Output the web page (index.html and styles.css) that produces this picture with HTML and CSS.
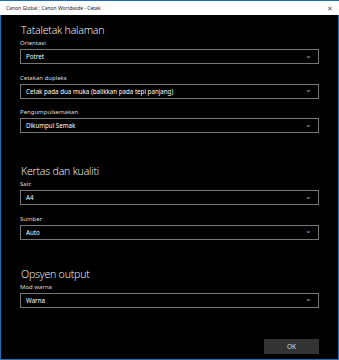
FILE: index.html
```html
<!DOCTYPE html>
<html lang="ms">
<head>
    <meta charset="UTF-8">
    <meta name="viewport" content="width=device-width, initial-scale=1.0">
    <title>Canon Global : Canon Worldwide - Cetak</title>
    <link rel="stylesheet" href="styles.css">
</head>
<body>
    <div class="window">
        <div class="titlebar">
            <span class="title">Canon Global : Canon Worldwide - Cetak</span>
            <span class="close">✕</span>
        </div>
        <div class="content">
            <h2>Tataletak halaman</h2>
            <div class="field">
                <label>Orientasi</label>
                <div class="select"><span>Potret</span><span class="chev">⌄</span></div>
            </div>
            <div class="field">
                <label>Cetakan dupleks</label>
                <div class="select"><span>Cetak pada dua muka (balikkan pada tepi panjang)</span><span class="chev">⌄</span></div>
            </div>
            <div class="field">
                <label>Pengumpulsemakan</label>
                <div class="select"><span>Dikumpul Semak</span><span class="chev">⌄</span></div>
            </div>

            <h2 class="section">Kertas dan kualiti</h2>
            <div class="field">
                <label>Saiz</label>
                <div class="select"><span>A4</span><span class="chev">⌄</span></div>
            </div>
            <div class="field">
                <label>Sumber</label>
                <div class="select"><span>Auto</span><span class="chev">⌄</span></div>
            </div>

            <h2 class="section last">Opsyen output</h2>
            <div class="field">
                <label>Mod warna</label>
                <div class="select"><span>Warna</span><span class="chev">⌄</span></div>
            </div>
        </div>
        <div class="buttons">
            <button type="button">OK</button>
        </div>
    </div>
</body>
</html>
```

FILE: styles.css
```css
body {
    margin: 0;
    padding: 0;
    background-color: black;
    font-family: "Noto Sans", "Open Sans", sans-serif;
}

.window {
    width: 339px;
    height: 360px;
    box-sizing: border-box;
    border: 1px solid #1f6fb6;
    border-top: none;
    display: flex;
    flex-direction: column;
    background-color: black;
}

.titlebar {
    height: 14px;
    background-color: white;
    display: flex;
    align-items: center;
    justify-content: space-between;
    padding: 0 6px 0 6px;
    margin: 0 -1px;
    border-top: 1px solid #1f6fb6;
}

.title {
    font-size: 5px;
    color: #222;
}

.close {
    font-size: 7px;
    color: #555;
}

.content {
    padding: 0 19px 0 19px;
    color: white;
    flex: 1;
}

h2 {
    font-family: "Open Sans", "Noto Sans", sans-serif;
    font-weight: 300;
    font-size: 10.6px;
    letter-spacing: -0.2px;
    margin: 8px 0 2px 1px;
    color: #fff;
}

h2.section {
    margin-top: 31px;
}

h2.section.last {
    margin-top: 27px;
}

.field {
    margin-bottom: 9.5px;
}

label {
    display: block;
    font-size: 6px;
    color: #ddd;
    margin-bottom: 2px;
}

.select {
    height: 15px;
    box-sizing: border-box;
    border: 1px solid #777;
    display: flex;
    align-items: center;
    justify-content: space-between;
    padding: 0 6px 0 5px;
    font-size: 6.2px;
    color: white;
}

.chev {
    font-size: 8px;
    color: #aaa;
    line-height: 8px;
    margin-top: -4px;
}

.buttons {
    display: flex;
    justify-content: flex-end;
    padding: 0 19px 5px 0;
}

button {
    width: 55px;
    height: 15px;
    background-color: #333;
    color: #ddd;
    border: none;
    font-family: "Noto Sans", sans-serif;
    font-size: 6.5px;
    padding: 0;
}
```
